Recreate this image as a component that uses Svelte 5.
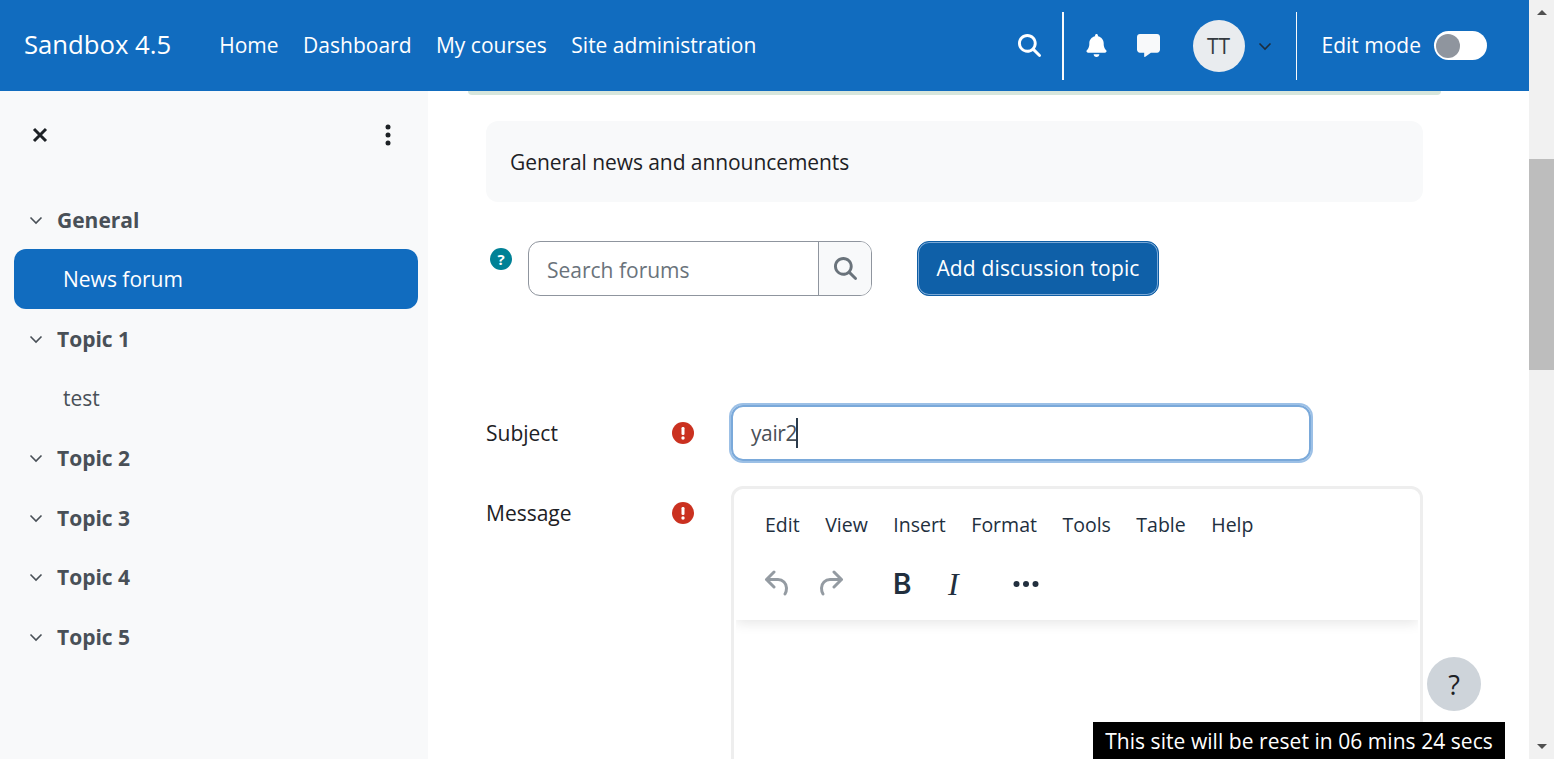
<script>
  const navLinks = ["Home", "Dashboard", "My courses", "Site administration"];
  const courseIndex = [
    { title: "General", items: ["News forum"], active: "News forum" },
    { title: "Topic 1", items: ["test"] },
    { title: "Topic 2", items: [] },
    { title: "Topic 3", items: [] },
    { title: "Topic 4", items: [] },
    { title: "Topic 5", items: [] }
  ];
  const editorMenu = ["Edit", "View", "Insert", "Format", "Tools", "Table", "Help"];
</script>

<div class="page">
  <div class="viewport">
    <header class="navbar">
      <span class="brand">Sandbox 4.5</span>
      <nav class="primary">
        {#each navLinks as link}
          <span>{link}</span>
        {/each}
      </nav>
      <div class="usernav">
        <svg class="nav-search" viewBox="0 0 512 512"><path fill="currentColor" d="M416 208c0 45.9-14.9 88.3-40 122.7L502.6 457.4c12.5 12.5 12.5 32.8 0 45.3s-32.8 12.5-45.3 0L330.7 376c-34.4 25.2-76.8 40-122.7 40C93.1 416 0 322.9 0 208S93.1 0 208 0S416 93.1 416 208zM208 352a144 144 0 1 0 0-288 144 144 0 1 0 0 288z"/></svg>
        <div class="divider first"></div>
        <svg class="bell" viewBox="0 0 448 512"><path fill="currentColor" d="M224 0c-17.7 0-32 14.3-32 32V51.2C119 66 64 130.6 64 208v18.8c0 47-17.3 92.4-48.6 127.6l-7.4 8.3c-8.4 9.4-10.4 22.9-5.3 34.4S19.4 416 32 416H416c12.6 0 24-7.4 29.2-18.9s3.1-25-5.3-34.4l-7.4-8.3C401.3 319.2 384 273.9 384 226.8V208c0-77.4-55-142-128-156.8V32c0-17.7-14.3-32-32-32zm45.3 493.3c12-12 18.7-28.3 18.7-45.3H224 160c0 17 6.7 33.3 18.7 45.3s28.3 18.7 45.3 18.7s33.3-6.7 45.3-18.7z"/></svg>
        <svg class="chat" viewBox="0 0 512 512"><path fill="currentColor" d="M64 0C28.7 0 0 28.7 0 64V352c0 35.3 28.7 64 64 64h96v80c0 6.1 3.4 11.6 8.8 14.3s11.9 2.1 16.8-1.5L309.3 416H448c35.3 0 64-28.7 64-64V64c0-35.3-28.7-64-64-64H64z"/></svg>
        <div class="avatar">TT</div>
        <svg class="avatar-caret" viewBox="0 0 14 14"><path d="M1.5 4.5 7 10l5.5-5.5" fill="none" stroke="currentColor" stroke-width="1.6"/></svg>
        <div class="divider"></div>
        <span class="edit-label">Edit mode</span>
        <div class="switch"><span class="knob"></span></div>
      </div>
    </header>

    <div class="body">
      <aside class="drawer">
        <div class="drawer-top">
          <svg class="close" viewBox="0 0 16 16"><path d="M2 2l12 12M14 2 2 14" stroke="currentColor" stroke-width="3" fill="none"/></svg>
          <svg class="kebab" viewBox="0 0 6 22"><circle cx="3" cy="3" r="2.5"/><circle cx="3" cy="11" r="2.5"/><circle cx="3" cy="19" r="2.5"/></svg>
        </div>
        <div class="index">
          {#each courseIndex as section}
            <div class="section">
              <svg class="chev" viewBox="0 0 14 14"><path d="M1.5 4.5 7 10l5.5-5.5" fill="none" stroke="currentColor" stroke-width="1.6"/></svg>
              <span>{section.title}</span>
            </div>
            {#each section.items as item}
              <div class="item" class:active={section.active === item}>{item}</div>
            {/each}
          {/each}
        </div>
      </aside>

      <main class="main">
        <div class="notice-edge"></div>
        <div class="content">
          <div class="intro">General news and announcements</div>

          <div class="tools">
            <span class="help-dot">?</span>
            <div class="search">
              <span class="placeholder">Search forums</span>
              <span class="search-btn">
                <svg viewBox="0 0 512 512"><path fill="currentColor" d="M416 208c0 45.9-14.9 88.3-40 122.7L502.6 457.4c12.5 12.5 12.5 32.8 0 45.3s-32.8 12.5-45.3 0L330.7 376c-34.4 25.2-76.8 40-122.7 40C93.1 416 0 322.9 0 208S93.1 0 208 0S416 93.1 416 208zM208 352a144 144 0 1 0 0-288 144 144 0 1 0 0 288z"/></svg>
              </span>
            </div>
            <button class="add">Add discussion topic</button>
          </div>

          <div class="form-row subject">
            <label for="subject">Subject</label>
            <svg class="required" viewBox="0 0 22 22"><circle cx="11" cy="11" r="11"/><rect x="9.5" y="5" width="3" height="8" rx="1.2" fill="#fff"/><circle cx="11" cy="16" r="1.7" fill="#fff"/></svg>
            <div class="subject-input" id="subject">yair2<span class="caret"></span></div>
          </div>

          <div class="form-row message">
            <label for="message">Message</label>
            <svg class="required" viewBox="0 0 22 22"><circle cx="11" cy="11" r="11"/><rect x="9.5" y="5" width="3" height="8" rx="1.2" fill="#fff"/><circle cx="11" cy="16" r="1.7" fill="#fff"/></svg>
            <div class="editor" id="message">
              <div class="editor-head">
                <div class="menubar">
                  {#each editorMenu as entry}
                    <span>{entry}</span>
                  {/each}
                </div>
                <div class="toolbar">
                  <svg class="tool undo" viewBox="0 0 26 26"><path d="M10 2 2.5 9.5 10 17M2.5 9.5H14a8.5 8.5 0 0 1 8.5 8.5c0 2.5-.5 4.5-1.5 6" fill="none" stroke="currentColor" stroke-width="3" stroke-linecap="round" stroke-linejoin="round"/></svg>
                  <svg class="tool redo" viewBox="0 0 26 26"><path d="M16 2l7.5 7.5L16 17M23.5 9.5H12A8.5 8.5 0 0 0 3.5 18c0 2.5.5 4.5 1.5 6" fill="none" stroke="currentColor" stroke-width="3" stroke-linecap="round" stroke-linejoin="round"/></svg>
                  <span class="bold">B</span>
                  <span class="italic">I</span>
                  <svg class="more" viewBox="0 0 26 6"><circle cx="3.5" cy="3" r="3"/><circle cx="13" cy="3" r="3"/><circle cx="22.5" cy="3" r="3"/></svg>
                </div>
              </div>
            </div>
          </div>
        </div>
      </main>
    </div>

    <div class="float-help">?</div>
    <div class="reset-banner">This site will be reset in 06 mins 24 secs</div>
  </div>

  <div class="scrollbar">
    <span class="arrow up"></span>
    <div class="track"><div class="thumb"></div></div>
    <span class="arrow down"></span>
  </div>
</div>

<style>
  :global(body) {
    margin: 0;
    overflow: hidden;
  }
  .page {
    display: flex;
    height: 759px;
    width: 1554px;
    overflow: hidden;
    font-family: "Open Sans", "Noto Sans", sans-serif;
    font-size: 21px;
    color: #1d2125;
    background: #fff;
  }
  .viewport {
    position: relative;
    flex: 1;
    min-width: 0;
    display: flex;
    flex-direction: column;
    overflow: hidden;
  }

  .navbar {
    flex: 0 0 91px;
    display: flex;
    align-items: center;
    background: #116cbf;
    color: #fff;
    padding-left: 24px;
  }
  .brand {
    font-size: 25.7px;
    margin: -2px 48px 0 0;
  }
  .primary {
    display: flex;
    gap: 24.5px;
    margin-top: -2px;
  }
  .usernav {
    margin-left: auto;
    display: flex;
    align-items: center;
    padding-right: 42px;
  }
  .nav-search {
    width: 23px;
    height: 23px;
    margin-right: 21px;
  }
  .divider {
    width: 1px;
    height: 68px;
    background: #f8f9fa;
  }
  .divider.first {
    width: 2px;
    margin-right: 22px;
  }
  .bell {
    width: 21px;
    height: 23px;
    margin-right: 30px;
  }
  .chat {
    width: 23px;
    height: 23px;
    color: #f8f9fa;
    margin-right: 33px;
  }
  .avatar {
    width: 52px;
    height: 52px;
    border-radius: 50%;
    background: #e9ecef;
    color: #343a40;
    display: flex;
    align-items: center;
    justify-content: center;
    margin-right: 13px;
  }
  .avatar-caret {
    width: 14px;
    height: 14px;
    color: #1d2d3d;
    margin-right: 24px;
  }
  .edit-label {
    margin: -2px 13px 0 25px;
  }
  .switch {
    width: 53px;
    height: 29px;
    box-sizing: border-box;
    border-radius: 15px;
    background: #fff;
    padding: 2px;
  }
  .knob {
    display: block;
    width: 24px;
    height: 24px;
    margin-top: 0.5px;
    border-radius: 50%;
    background: #8f959e;
  }

  .body {
    flex: 1;
    min-height: 0;
    display: flex;
  }
  .drawer {
    flex: 0 0 428px;
    background: #f8f9fa;
    padding: 0 10px 0 14px;
    box-sizing: border-box;
  }
  .drawer-top {
    display: flex;
    align-items: center;
    justify-content: space-between;
    height: 88px;
    padding: 0 27px 0 18px;
  }
  .close {
    width: 16px;
    height: 16px;
    color: #1d2125;
  }
  .kebab {
    width: 6px;
    height: 22px;
    fill: #1d2125;
  }
  .index {
    padding-top: 10.5px;
    color: #495057;
  }
  .section {
    height: 59.6px;
    display: flex;
    align-items: center;
    gap: 14px;
    padding: 1px 0 0 15px;
    font-weight: 700;
    box-sizing: border-box;
  }
  .chev {
    width: 14px;
    height: 14px;
    color: #495057;
  }
  .item {
    height: 59.5px;
    display: flex;
    align-items: center;
    padding-left: 49px;
    border-radius: 12px;
  }
  .item.active {
    background: #116cbf;
    color: #fff;
  }

  .main {
    flex: 1;
    min-width: 0;
    display: flex;
    flex-direction: column;
    padding-left: 40px;
  }
  .notice-edge {
    flex: none;
    width: 973px;
    height: 4px;
    background: #d7e6dc;
    border-radius: 0 0 10px 10px;
  }
  .content {
    width: 937px;
    margin-left: 18px;
  }
  .intro {
    margin-top: 26px;
    height: 81px;
    border-radius: 12px;
    background: #f8f9fa;
    padding: 0 24px;
    display: flex;
    align-items: center;
    letter-spacing: -0.07px;
  }

  .tools {
    margin-top: 39px;
    display: flex;
    align-items: flex-start;
  }
  .help-dot {
    width: 22px;
    height: 22px;
    margin: 7px 4px 0 4px;
    border-radius: 50%;
    background: #008196;
    color: #fff;
    font-size: 15px;
    font-weight: 700;
    display: flex;
    align-items: center;
    justify-content: center;
    flex: none;
  }
  .search {
    margin-left: 12px;
    width: 344px;
    height: 55px;
    box-sizing: border-box;
    border: 1px solid #8f959e;
    border-radius: 12px;
    display: flex;
    overflow: hidden;
  }
  .placeholder {
    flex: 1;
    color: #6a737b;
    padding: 2px 0 0 18px;
    display: flex;
    align-items: center;
  }
  .search-btn {
    width: 52px;
    border-left: 1px solid #8f959e;
    background: #f8f9fa;
    color: #6a737b;
    display: flex;
    align-items: center;
    justify-content: center;
  }
  .search-btn svg {
    width: 23px;
    height: 23px;
  }
  .add {
    margin-left: 45px;
    width: 242px;
    height: 55px;
    border: 1px solid #0f5ea5;
    box-shadow: inset 0 0 0 1px #7aa8d6;
    border-radius: 12px;
    background: #0f60a8;
    color: #fff;
    font: inherit;
    letter-spacing: 0.15px;
    padding: 0 0 1px;
  }

  .form-row {
    display: flex;
    align-items: flex-start;
  }
  .form-row label {
    width: 186px;
    flex: none;
  }
  .required {
    width: 22px;
    height: 22px;
    fill: #ca3120;
    flex: none;
    margin-right: 37px;
  }
  .subject {
    margin-top: 109px;
    height: 56px;
    align-items: center;
  }
  .subject-input {
    width: 580px;
    height: 56px;
    box-sizing: border-box;
    border: 2px solid #7aa9da;
    box-shadow: 0 0 0 2px #9cc0e6;
    border-radius: 12px;
    padding-left: 18px;
    color: #495057;
    letter-spacing: -0.4px;
    display: flex;
    align-items: center;
  }
  .caret {
    width: 2px;
    height: 30px;
    margin-left: -1px;
    background: #2b3b4b;
  }
  .message {
    margin-top: 25px;
  }
  .message label {
    margin-top: 13px;
  }
  .message .required {
    margin-top: 16px;
  }
  .editor {
    flex: 1;
    height: 400px;
    box-sizing: border-box;
    border: 3px solid #eeeeee;
    border-radius: 12px;
    overflow: hidden;
  }
  .editor-head {
    height: 131px;
    box-sizing: border-box;
    margin: 0 2px;
    padding: 20px 0 0 29px;
    box-shadow: 0 3px 12px rgba(0, 0, 0, 0.1);
    clip-path: inset(0 0 -20px 0);
  }
  .menubar {
    display: flex;
    gap: 25.5px;
    font-size: 19.5px;
    color: #222f3e;
    height: 30px;
    align-items: center;
  }
  .toolbar {
    margin-top: 29px;
    display: flex;
    align-items: center;
    height: 30px;
    color: #222f3e;
  }
  .tool {
    width: 26px;
    height: 26px;
    color: #949ba2;
  }
  .undo {
    margin-left: -1px;
  }
  .redo {
    margin-left: 28px;
  }
  .bold {
    margin: 2px 0 0 49px;
    font-family: Inter, sans-serif;
    font-size: 28px;
    font-weight: 600;
    width: 33px;
  }
  .italic {
    margin: 2px 0 0 22px;
    font-family: "Liberation Serif", serif;
    font-style: italic;
    font-size: 32px;
    width: 20px;
  }
  .more {
    margin: 1px 0 0 45px;
    width: 26px;
    height: 6px;
    fill: #222f3e;
  }

  .float-help {
    position: absolute;
    left: 1427px;
    top: 657px;
    width: 54px;
    height: 54px;
    border-radius: 50%;
    background: #ced4da;
    color: #1d2125;
    font-size: 27px;
    font-weight: 500;
    display: flex;
    align-items: center;
    justify-content: center;
  }
  .reset-banner {
    position: absolute;
    left: 1093px;
    top: 722px;
    width: 412px;
    height: 37px;
    box-sizing: border-box;
    background: #000;
    color: #fff;
    letter-spacing: 0.05px;
    display: flex;
    align-items: center;
    justify-content: center;
    white-space: nowrap;
  }

  .scrollbar {
    flex: 0 0 25px;
    background: #f1f1f1;
    display: flex;
    flex-direction: column;
    align-items: center;
  }
  .arrow {
    width: 0;
    height: 0;
    border-left: 5.5px solid transparent;
    border-right: 5.5px solid transparent;
    flex: none;
  }
  .arrow.up {
    border-bottom: 5.5px solid #505050;
    margin-top: 10px;
  }
  .arrow.down {
    border-top: 5.5px solid #505050;
    margin-bottom: 10px;
  }
  .track {
    flex: 1;
    width: 100%;
  }
  .thumb {
    margin-top: 144px;
    height: 211px;
    background: #bdbdbd;
  }
</style>
